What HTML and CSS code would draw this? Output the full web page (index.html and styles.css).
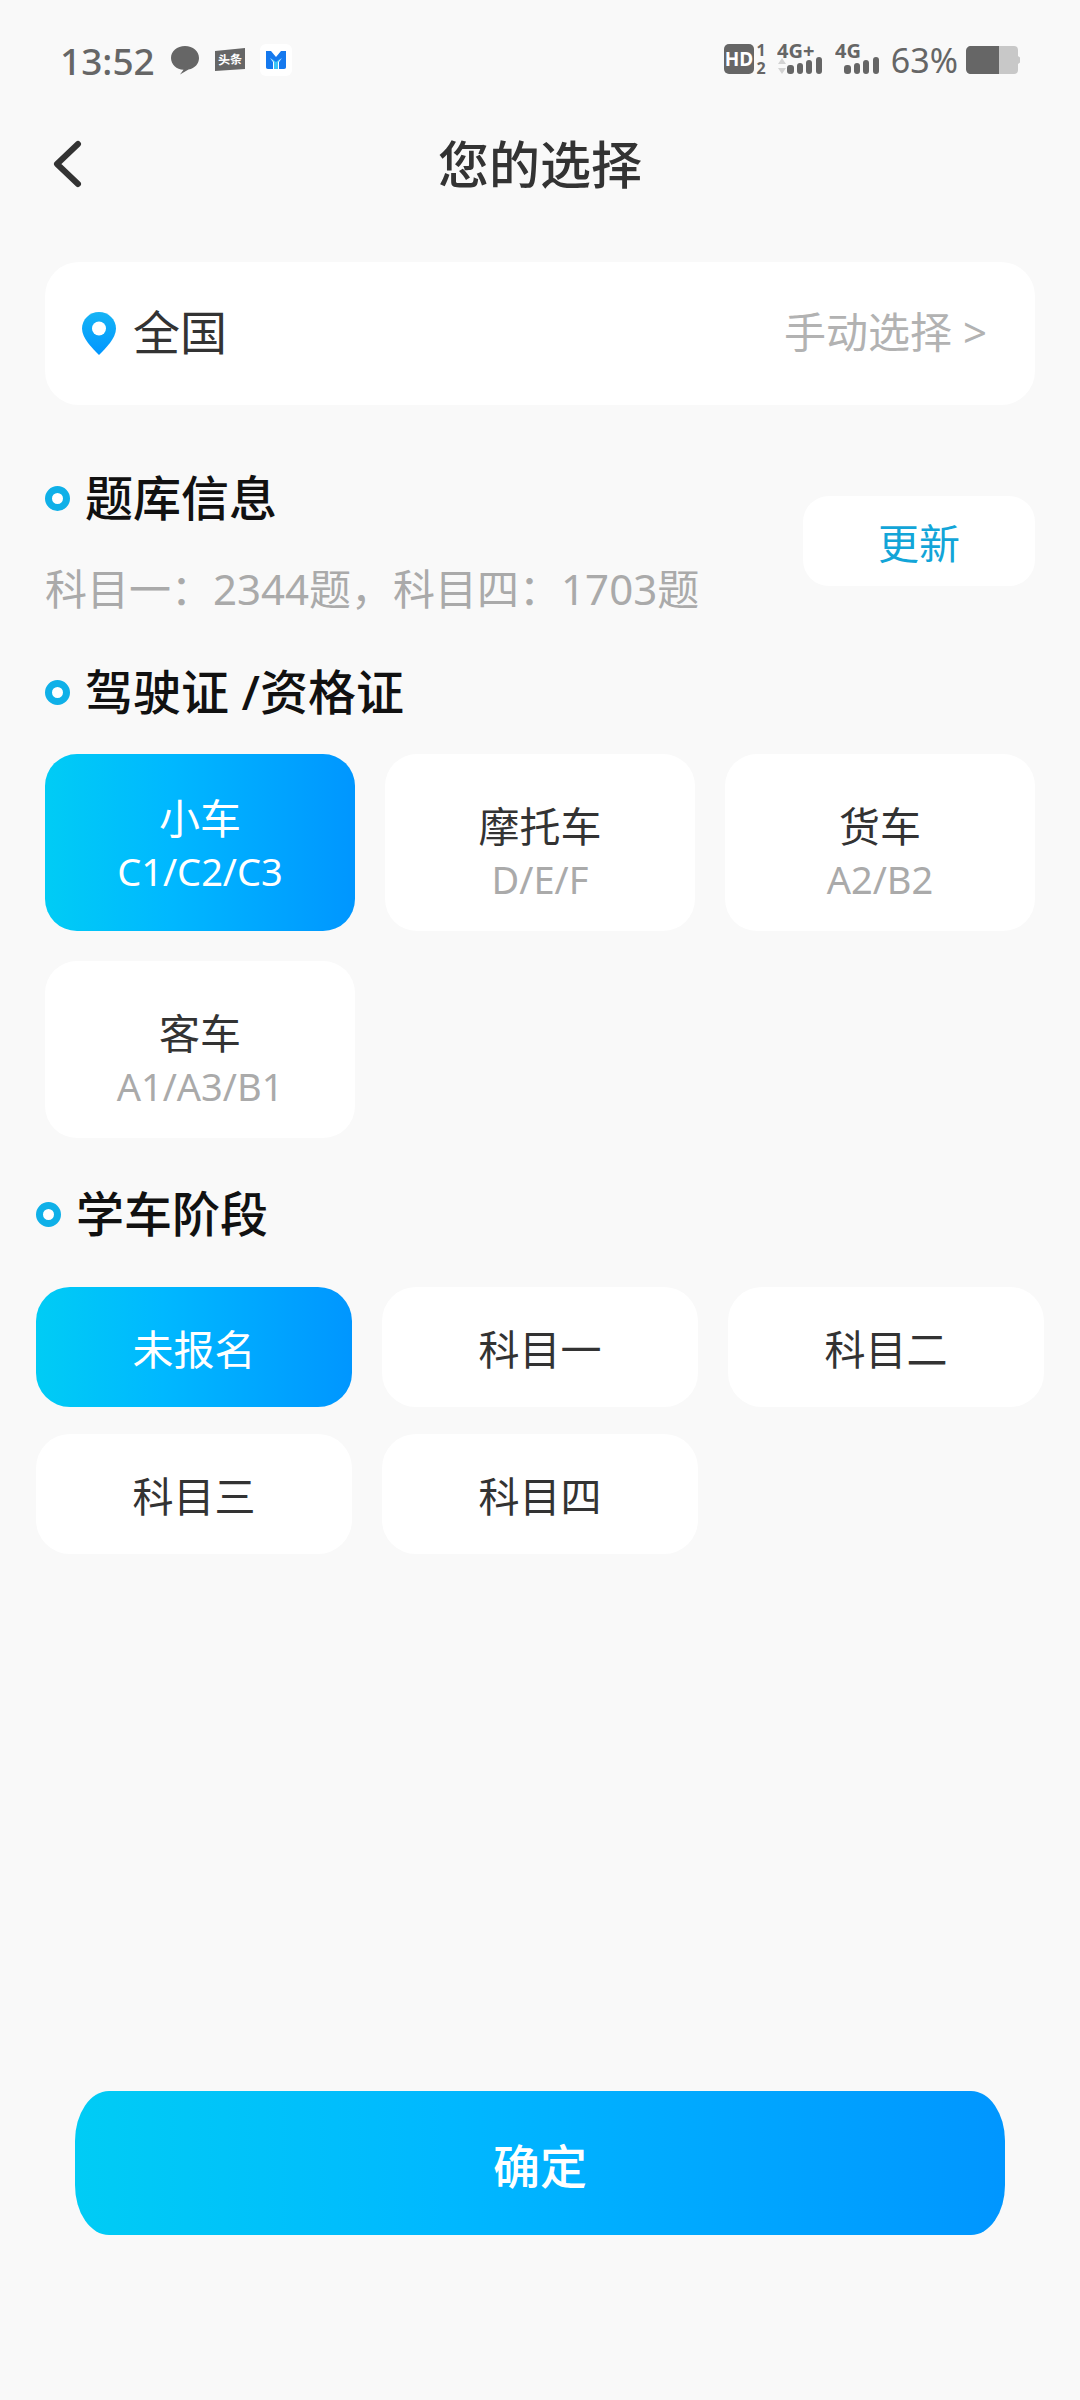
FILE: index.html
```html
<!DOCTYPE html>
<html lang="zh-CN">
<head>
    <meta charset="UTF-8">
    <title>您的选择</title>
    <meta name="viewport" content="width=device-width, initial-scale=1.0">
    <link rel="stylesheet" href="styles.css">
</head>
<body>
    <div class="page">
        <div class="status-bar">
            <div class="status-left">
                <span class="time">13:52</span>
                <svg class="ic-bubble" width="30" height="30" viewBox="0 0 30 30">
                    <path d="M15 1C7 1 1 6.200 1 13c0 6.500 5.500 11.500 12.500 11.800L10 29.500l8.500-5C25 23.300 29 18.700 29 13 29 6.200 23 1 15 1z" fill="#666"/>
                </svg>
                <svg class="ic-toutiao" width="30" height="36" viewBox="0 -6 30 36">
                    <path d="M0 3 30 0V21L0 23z" fill="#666"/>
                    <text x="15" y="16" class="toutiao-text" text-anchor="middle" transform="rotate(-3 15 12)">头条</text>
                </svg>
                <svg class="ic-app" width="32" height="32" viewBox="0 0 32 32">
                    <rect width="32" height="32" rx="6" fill="#fff"/>
                    <path d="M6 7h5l5 6 5-6h5v16c0 1-.5 2-2 2h-5v-7l3-4-6 5-6-5 3 4v7H8c-1.500 0-2-1-2-2z" fill="#1579ee"/>
                    <path d="M11 14l5 4 5-4-3 4v7h-4v-7z" fill="#3cc4f5"/>
                </svg>
            </div>
            <div class="status-right">
                <svg class="ic-hd" width="44" height="52" viewBox="0 -10 44 52">
                    <rect y="0" width="30" height="30" rx="5" fill="#666"/>
                    <text x="15" y="22" class="hd-text" text-anchor="middle">HD</text>
                    <text x="37" y="12" class="sim-text" text-anchor="middle">1</text>
                    <text x="37" y="30" class="sim-text" text-anchor="middle">2</text>
                </svg>
                <svg class="ic-net" width="46" height="52" viewBox="0 -10 46 52">
                    <text x="0" y="14" class="net-text">4G+</text>
                    <path d="M5 14l4 6H1zM5 30l4-6H1z" fill="#d2d2d2"/>
                    <rect x="10" y="21" width="7" height="9" rx="3" fill="#666"/>
                    <rect x="20" y="19" width="6" height="11" rx="3" fill="#666"/>
                    <rect x="29" y="16" width="6" height="14" rx="3" fill="#666"/>
                    <rect x="39" y="13" width="6" height="17" rx="3" fill="#666"/>
                </svg>
                <svg class="ic-net" width="46" height="52" viewBox="0 -10 46 52">
                    <text x="0" y="14" class="net-text">4G</text>
                    <rect x="9" y="21" width="7" height="9" rx="3" fill="#666"/>
                    <rect x="19" y="19" width="6" height="11" rx="3" fill="#666"/>
                    <rect x="28" y="16" width="6" height="14" rx="3" fill="#666"/>
                    <rect x="38" y="13" width="6" height="17" rx="3" fill="#666"/>
                </svg>
                <span class="battery-pct">63%</span>
                <svg class="ic-battery" width="54" height="28" viewBox="0 0 54 28">
                    <path d="M33 0h15c2.500 0 4 1.500 4 4v6l2 1.500v5L52 18v6c0 2.500-1.500 4-4 4H33z" fill="#c8c8c8"/>
                    <path d="M33 0H5C2 0 0 2 0 5v18c0 3 2 5 5 5h28z" fill="#666"/>
                </svg>
            </div>
        </div>

        <div class="nav-bar">
            <svg class="back" width="30" height="50" viewBox="0 0 30 50">
                <path d="M26 6 5 26l21 20" fill="none" stroke="#333" stroke-width="6" stroke-linecap="round" stroke-linejoin="round"/>
            </svg>
            <h1 class="nav-title">您的选择</h1>
        </div>

        <div class="location-card">
            <div class="location-left">
                <svg width="34" height="44" viewBox="0 0 34 44">
                    <defs>
                        <linearGradient id="pinGrad" x1="0" y1="0" x2="0" y2="1">
                            <stop offset="0" stop-color="#16b4f5"/>
                            <stop offset="1" stop-color="#0096ff"/>
                        </linearGradient>
                    </defs>
                    <path d="M17 0C7.500 0 0 7.500 0 16.500 0 26 10 36 17 43 24 36 34 26 34 16.500 34 7.500 26.500 0 17 0z" fill="url(#pinGrad)"/>
                    <circle cx="17" cy="16.500" r="7" fill="#fff"/>
                </svg>
                <span class="location-name">全国</span>
            </div>
            <span class="location-action">手动选择 &gt;</span>
        </div>

        <div class="bank-row">
            <div class="bank-info">
                <div class="section-title"><i class="dot"></i>题库信息</div>
                <p class="bank-count">科目一：2344题，科目四：1703题</p>
            </div>
            <button class="update-btn">更新</button>
        </div>

        <div class="section-title license-title"><i class="dot"></i>驾驶证 /资格证</div>
        <div class="license-grid">
            <div class="license-card active"><span class="card-name">小车</span><span class="card-code">C1/C2/C3</span></div>
            <div class="license-card"><span class="card-name">摩托车</span><span class="card-code">D/E/F</span></div>
            <div class="license-card"><span class="card-name">货车</span><span class="card-code">A2/B2</span></div>
            <div class="license-card"><span class="card-name">客车</span><span class="card-code">A1/A3/B1</span></div>
        </div>

        <div class="stage-section">
            <div class="section-title"><i class="dot"></i>学车阶段</div>
            <div class="stage-grid">
                <div class="stage-chip active">未报名</div>
                <div class="stage-chip">科目一</div>
                <div class="stage-chip">科目二</div>
                <div class="stage-chip">科目三</div>
                <div class="stage-chip">科目四</div>
            </div>
        </div>

        <button class="confirm-btn">确定</button>
    </div>
</body>
</html>
```

FILE: styles.css
```css
:root {
    --accent: #0fb0e8;
    --gradient: linear-gradient(90deg, #00ccf5, #00b8ff 40%, #0096ff);
    --text: #333333;
    --muted: #aaaaaa;
}
* {
    box-sizing: border-box;
}
body {
    margin: 0;
    background: #f9f9f9;
    font-family: "Noto Sans", "Noto Sans CJK SC", sans-serif;
    color: var(--text);
}
.page {
    width: 1080px;
    height: 2400px;
    display: flex;
    flex-direction: column;
}

/* status bar */
.status-bar {
    height: 120px;
    padding: 0 60px;
    display: flex;
    justify-content: space-between;
    align-items: center;
}
.status-left, .status-right {
    display: flex;
    align-items: center;
}
.time {
    font-size: 37px;
    color: #666;
    font-weight: 500;
}
.ic-bubble { margin-left: 15px; }
.ic-toutiao { margin-left: 15px; }
.ic-app { margin-left: 15px; }
.toutiao-text {
    font-size: 12px;
    font-weight: 700;
    fill: #fff;
}
.hd-text {
    font-size: 19px;
    font-weight: 700;
    fill: #fff;
}
.sim-text {
    font-size: 16px;
    font-weight: 700;
    fill: #666;
}
.net-text {
    font-size: 20px;
    font-weight: 700;
    fill: #666;
}
.ic-hd { margin-right: 9px; }
.ic-net { margin-right: 12px; }
.battery-pct {
    font-size: 34px;
    color: #666;
    margin-left: -2px;
    margin-right: 8px;
}

/* nav */
.nav-bar {
    height: 86px;
    position: relative;
    display: flex;
    align-items: center;
    justify-content: center;
}
.back {
    position: absolute;
    left: 52px;
    top: 18px;
}
.nav-title {
    margin: -2px 0 0;
    font-size: 51px;
    font-weight: 500;
    color: var(--text);
}

/* location */
.location-card {
    height: 143px;
    margin: 56px 45px 0;
    padding: 0 48px 0 37px;
    background: #fff;
    border-radius: 34px;
    display: flex;
    align-items: center;
    justify-content: space-between;
}
.location-left {
    display: flex;
    align-items: center;
    gap: 17px;
}
.location-name {
    font-size: 47px;
    line-height: 60px;
    margin-top: -4px;
}
.location-action {
    font-size: 42px;
    line-height: 56px;
    margin-top: -4px;
    color: #b2b2b2;
}

/* section heads */
.section-title {
    display: flex;
    align-items: center;
    font-size: 48px;
    font-weight: 500;
    color: #111;
    line-height: 68px;
}
.dot {
    width: 25px;
    height: 25px;
    margin-right: 15px;
    border: 7px solid var(--accent);
    border-radius: 50%;
    background: #fff;
}

/* question bank */
.bank-row {
    margin: 59px 45px 0;
    display: flex;
    justify-content: space-between;
    align-items: center;
}
.bank-count {
    margin: 29px 0 0;
    font-size: 42px;
    line-height: 56px;
    color: var(--muted);
}
.update-btn {
    width: 232px;
    height: 90px;
    border: none;
    border-radius: 26px;
    background: #fff;
    font: inherit;
    font-size: 41px;
    color: #12a5d8;
}

/* licence cards */
.license-title {
    margin: 41px 45px 0;
}
.license-grid {
    margin: 28px 45px 0;
    display: grid;
    grid-template-columns: repeat(3, 310px);
    grid-auto-rows: 177px;
    gap: 30px;
}
.license-card {
    padding-top: 16px;
    background: #fff;
    border-radius: 32px;
    display: flex;
    flex-direction: column;
    align-items: center;
    justify-content: center;
}
.card-name {
    font-size: 41px;
    line-height: 56px;
}
.card-code {
    font-size: 38px;
    line-height: 50px;
    color: var(--muted);
}
.license-card.active {
    padding-top: 0;
    background: var(--gradient);
}
.license-card.active span {
    color: #fff;
}

/* stage chips */
.stage-section {
    margin: 42px 36px 0;
}
.stage-grid {
    margin-top: 39px;
    display: grid;
    grid-template-columns: repeat(3, 316px);
    grid-auto-rows: 120px;
    gap: 27px 30px;
}
.stage-chip {
    background: #fff;
    border-radius: 34px;
    font-size: 41px;
    display: flex;
    align-items: center;
    justify-content: center;
}
.stage-chip.active {
    background: var(--gradient);
    color: #fff;
}

/* confirm */
.confirm-btn {
    width: 930px;
    height: 144px;
    margin: 537px 75px 0;
    border: none;
    border-radius: 34px / 50px;
    background: var(--gradient);
    font: inherit;
    font-size: 47px;
    font-weight: 500;
    color: #fff;
}
```
